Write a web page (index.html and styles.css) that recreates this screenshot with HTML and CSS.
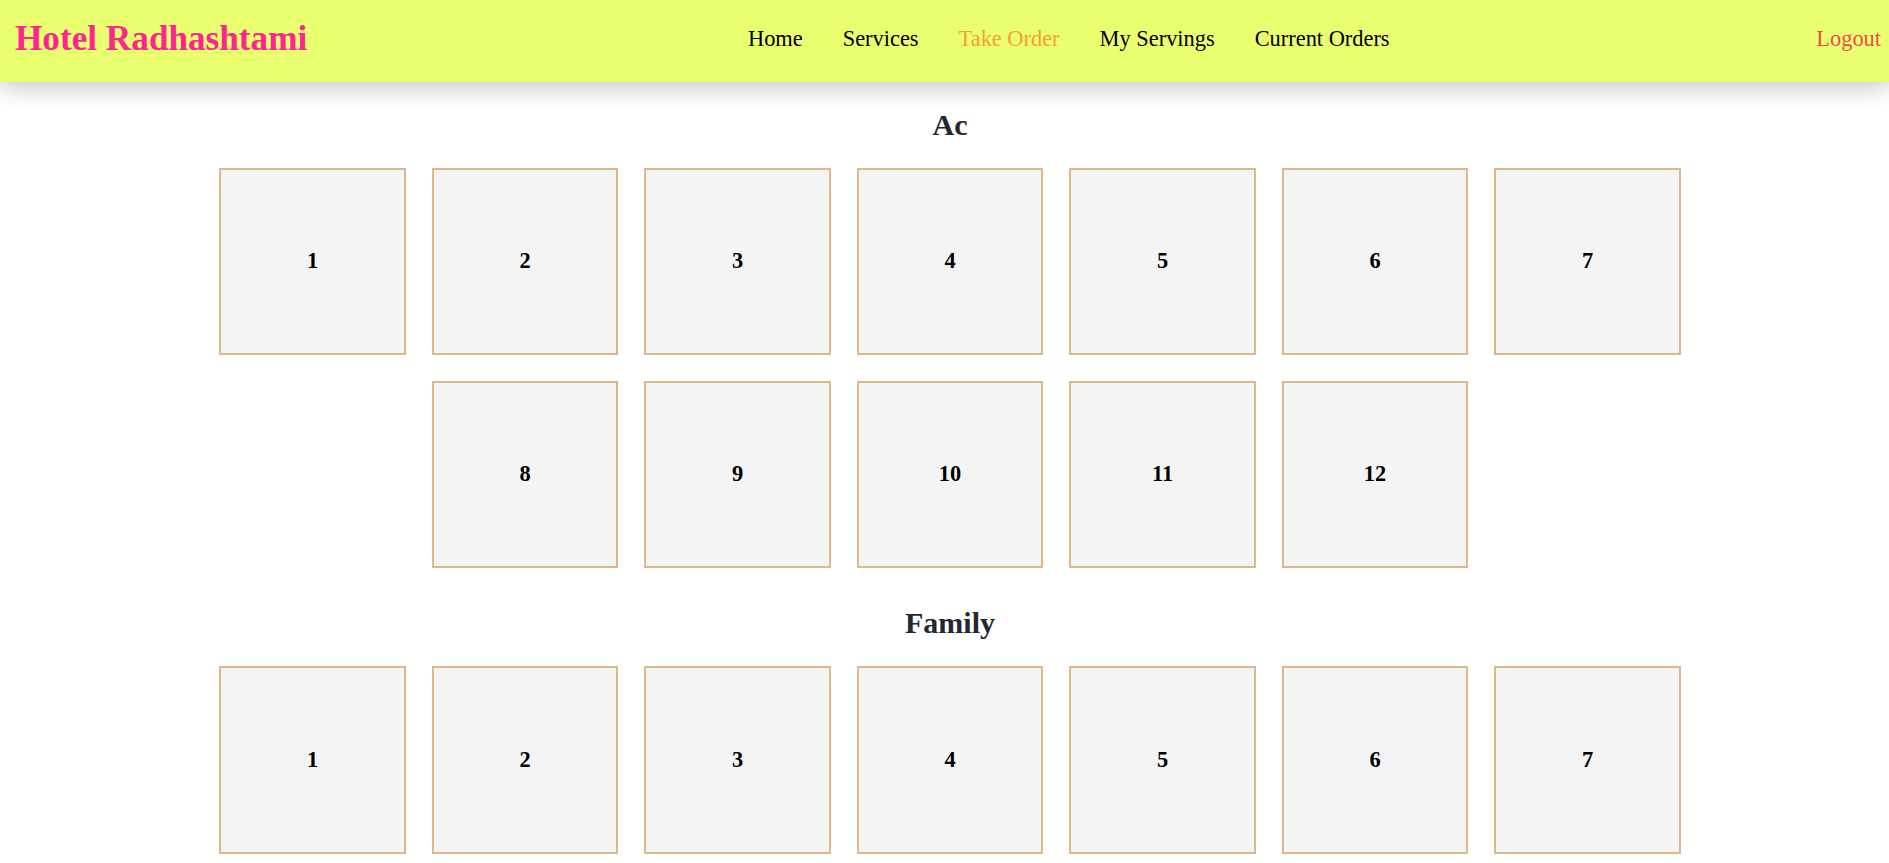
FILE: index.html
```html
<!DOCTYPE html>
<html lang="en">
<head>
<meta charset="utf-8">
<title>Hotel Radhashtami</title>
<link rel="stylesheet" href="styles.css">
</head>
<body>
<header class="topbar">
  <div class="brand">Hotel Radhashtami</div>
  <nav class="nav">
    <ul class="nav-list">
      <li><a class="nav-link" href="#">Home</a></li>
      <li><a class="nav-link" href="#">Services</a></li>
      <li><a class="nav-link active" href="#">Take Order</a></li>
      <li><a class="nav-link" href="#">My Servings</a></li>
      <li><a class="nav-link" href="#">Current Orders</a></li>
    </ul>
  </nav>
  <a class="logout" href="#">Logout</a>
</header>
<main class="content">
  <section class="category">
    <h2 class="category-title">Ac</h2>
    <div class="tables">
      <div class="table-box"><h3 class="table-no">1</h3></div>
      <div class="table-box"><h3 class="table-no">2</h3></div>
      <div class="table-box"><h3 class="table-no">3</h3></div>
      <div class="table-box"><h3 class="table-no">4</h3></div>
      <div class="table-box"><h3 class="table-no">5</h3></div>
      <div class="table-box"><h3 class="table-no">6</h3></div>
      <div class="table-box"><h3 class="table-no">7</h3></div>
      <div class="table-box"><h3 class="table-no">8</h3></div>
      <div class="table-box"><h3 class="table-no">9</h3></div>
      <div class="table-box"><h3 class="table-no">10</h3></div>
      <div class="table-box"><h3 class="table-no">11</h3></div>
      <div class="table-box"><h3 class="table-no">12</h3></div>
    </div>
  </section>
  <section class="category">
    <h2 class="category-title">Family</h2>
    <div class="tables">
      <div class="table-box"><h3 class="table-no">1</h3></div>
      <div class="table-box"><h3 class="table-no">2</h3></div>
      <div class="table-box"><h3 class="table-no">3</h3></div>
      <div class="table-box"><h3 class="table-no">4</h3></div>
      <div class="table-box"><h3 class="table-no">5</h3></div>
      <div class="table-box"><h3 class="table-no">6</h3></div>
      <div class="table-box"><h3 class="table-no">7</h3></div>
    </div>
  </section>
</main>
</body>
</html>
```
FILE: styles.css
```css
html, body {
  margin: 0;
  padding: 0;
  background: #ffffff;
  font-family: "Liberation Serif", "Times New Roman", serif;
}

.topbar {
  display: flex;
  align-items: center;
  height: 82px;
  box-sizing: border-box;
  padding: 0 8px 4px 15px;
  background: #e9ff70;
  box-shadow: 0 6px 22px rgba(0, 0, 0, 0.22);
  position: relative;
  z-index: 1;
}

.brand {
  font-size: 35.2px;
  font-weight: bold;
  color: #ff2491;
  white-space: nowrap;
}

.nav {
  flex: 1;
  display: flex;
  justify-content: center;
  padding-left: 14px;
}

.nav-list {
  display: flex;
  list-style: none;
  margin: 0;
  padding: 0;
}

.nav-link {
  display: block;
  padding: 0 20px;
  font-size: 22.4px;
  color: #000000;
  text-decoration: none;
  white-space: nowrap;
}

.nav-link.active {
  color: #f7a035;
}

.logout {
  font-size: 22.4px;
  color: #ee4a4a;
  text-decoration: none;
}

.content {
  padding: 25.6px 0 0 11px;
}

.category + .category {
  margin-top: 38px;
}

.category-title {
  margin: 0 0 26px;
  text-align: center;
  font-size: 30px;
  font-weight: bold;
  line-height: normal;
  color: #222831;
}

.tables {
  display: flex;
  flex-wrap: wrap;
  justify-content: center;
  gap: 25.5px 26px;
  max-width: 1480px;
  margin: 0 auto;
}

.table-box {
  width: 186.5px;
  height: 187.5px;
  box-sizing: border-box;
  border: 2px solid #deb887;
  background: #f4f4f4;
  display: flex;
  align-items: center;
  justify-content: center;
}

.table-no {
  margin: 0;
  font-size: 22.4px;
  font-weight: bold;
  color: #000000;
}
```
